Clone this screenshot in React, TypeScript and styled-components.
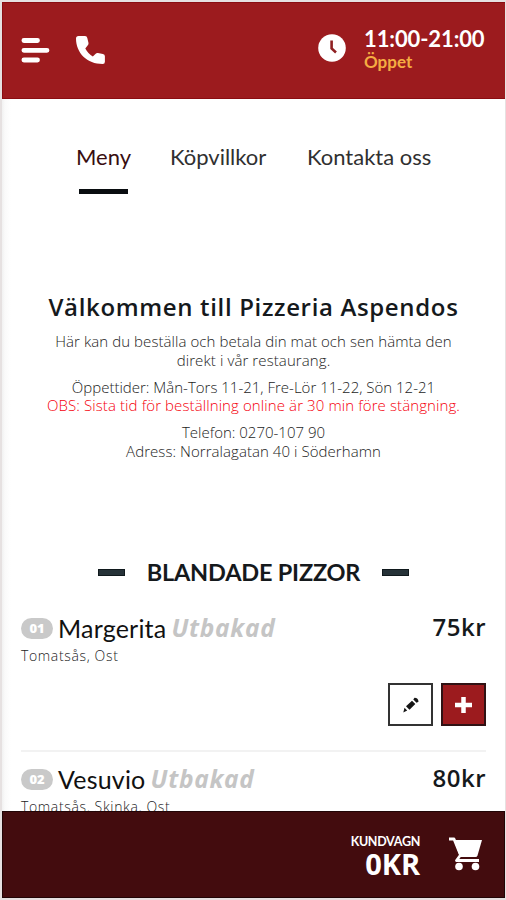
import React from 'react';
import styled, { createGlobalStyle } from 'styled-components';

const lato = "Lato, 'Open Sans', sans-serif";
const openSans = "'Open Sans', 'Noto Sans', sans-serif";

const GlobalStyle = createGlobalStyle`
  * { box-sizing: border-box; }
  body { margin: 0; background: #fff; overflow: hidden; }
  h1, h2, h3, p { margin: 0; }
  svg { display: block; }
`;

const Screen = styled.div`
  width: 506px;
  height: 900px;
  padding: 2px 1px 2px 2px;
  background: #e6e1e1;
  overflow: hidden;
`;

const Page = styled.div`
  display: flex;
  flex-direction: column;
  height: 896px;
  background: linear-gradient(90deg, #f1f1f1 0, #fafafa 3px, #fff 9px);
  color: #15191c;
`;

const Header = styled.header`
  display: flex;
  flex: none;
  align-items: flex-start;
  height: 97px;
  padding: 0 19px 0 18px;
  background: #9c1b1e;
  border: 1px solid #8a0d12;
  border-right: 0;
  color: #fff;
`;

const MenuIcon = styled.svg`
  margin-top: 34px;
`;

const PhoneIcon = styled.svg`
  margin: 33px 0 0 25px;
`;

const Hours = styled.div`
  display: flex;
  margin-left: auto;
`;

const ClockIcon = styled.svg`
  margin: 31px 18px 0 0;
`;

const HoursText = styled.div`
  width: 122px;
  padding-top: 22px;
  font-family: ${lato};
  font-weight: 700;
  white-space: nowrap;
`;

const Time = styled.div`
  font-size: 22px;
  line-height: 28px;
  letter-spacing: -0.1px;
`;

const Status = styled.div`
  font-size: 17px;
  line-height: 18px;
  color: #f5ac42;
`;

const Nav = styled.nav`
  display: flex;
  flex: none;
  height: 112px;
  padding: 45px 0 0 74px;
  font-family: ${lato};
  font-size: 22px;
  line-height: 26px;
  white-space: nowrap;
`;

const NavItem = styled.a<{ $active?: boolean; $width: number }>`
  width: ${p => p.$width}px;
  color: ${p => (p.$active ? '#380d10' : '#303030')};
  &::after {
    content: '';
    display: ${p => (p.$active ? 'block' : 'none')};
    width: 49px;
    height: 5px;
    margin: 19px 0 0 3px;
    background: #090d10;
  }
`;

const Welcome = styled.section`
  flex: none;
  height: 346px;
  padding-top: 79px;
  font-family: ${openSans};
  text-align: center;
  white-space: nowrap;
`;

const Title = styled.h1`
  font-size: 24px;
  font-weight: 650;
  line-height: 34px;
  letter-spacing: 0.65px;
  margin-bottom: 8px;
`;

const Info = styled.p`
  margin-bottom: 8.5px;
  font-size: 15px;
  line-height: 18.5px;
  font-weight: 300;
  color: #1c1c1c;
`;

const Line = styled.span<{ $spacing?: number; $alert?: boolean }>`
  display: block;
  letter-spacing: ${p => p.$spacing ?? 0}px;
  color: ${p => (p.$alert ? '#f5000c' : 'inherit')};
`;

const Category = styled.div`
  display: flex;
  flex: none;
  justify-content: center;
  align-items: center;
  gap: 22px;
  height: 30px;
`;

const Dash = styled.span`
  width: 27px;
  height: 7px;
  background: #263238;
  border: 1px solid #10191d;
`;

const CategoryName = styled.h2`
  font-family: ${lato};
  font-size: 23.5px;
  line-height: 30px;
  font-weight: 700;
  letter-spacing: -0.2px;
  white-space: nowrap;
`;

const Items = styled.main`
  flex: 1;
  min-height: 0;
  overflow: hidden;
  padding: 23px 19px 0;
`;

const Item = styled.article`
  height: 140px;
  & + & { border-top: 2px solid #f2f2f2; }
  & + & > :first-child { margin-top: 9px; }
`;

const ItemTop = styled.div`
  display: flex;
  align-items: center;
  height: 36px;
  white-space: nowrap;
`;

const Num = styled.span`
  width: 32px;
  height: 21px;
  margin-right: 5px;
  border-radius: 11px;
  background: #c9c9c9;
  color: #fff;
  font: 800 13px/21px ${openSans};
  text-align: center;
`;

const Name = styled.h3`
  font: 400 25px/32px ${lato};
  letter-spacing: 0.2px;
  color: #111;
`;

const Style = styled.span`
  margin-left: 5px;
  font: italic 700 24.5px/32px ${openSans};
  letter-spacing: 0.7px;
  color: #c5c5c5;
`;

const Price = styled.span`
  margin: -2px 0 0 auto;
  font: 600 24px/32px ${openSans};
  letter-spacing: 0.5px;
`;

const Ingredients = styled.p`
  height: 20px;
  font: 300 14px/20px ${openSans};
  letter-spacing: 0.65px;
  color: #1c1c1c;
`;

const Actions = styled.div`
  display: flex;
  justify-content: flex-end;
  gap: 8px;
  margin-top: 17px;
`;

const Action = styled.button<{ $primary?: boolean }>`
  display: flex;
  align-items: center;
  justify-content: center;
  width: 45px;
  height: 43px;
  padding: 0;
  border: 2px solid ${p => (p.$primary ? '#301214' : '#333')};
  background: ${p => (p.$primary ? '#9c1b1e' : '#fff')};
`;

const CartBar = styled.footer`
  display: flex;
  flex: none;
  justify-content: flex-end;
  height: 87px;
  padding-right: 21px;
  background: #430c0e;
  border: 1px solid #210506;
  color: #fff;
`;

const CartText = styled.div`
  padding-top: 22px;
  text-align: right;
  white-space: nowrap;
`;

const CartLabel = styled.div`
  font: 700 12.5px/15px ${lato};
  letter-spacing: -0.3px;
`;

const CartTotal = styled.div`
  font: 700 29px/29px ${openSans};
  letter-spacing: -0.1px;
`;

const CartIcon = styled.svg`
  margin: 25px 0 0 29px;
`;

const pizzas = [
  { num: '01', name: 'Margerita', price: '75kr', ingredients: 'Tomatsås, Ost' },
  { num: '02', name: 'Vesuvio', price: '80kr', ingredients: 'Tomatsås, Skinka, Ost' },
];

export default function App() {
  return (
    <Screen>
      <GlobalStyle />
      <Page>
        <Header>
          <MenuIcon width="30" height="28" viewBox="0 0 30 28" stroke="#fff" strokeWidth="4.8" strokeLinecap="round">
            <path d="M2.9 3.5H16.5M2.9 13.3H26M2.9 23H16.5" />
          </MenuIcon>
          <PhoneIcon width="30" height="30" viewBox="0 0 30 30" fill="#fff">
            <path d="M2.5 0h6.5q2 0 2.3 2l1.2 5q.2 1.3-.7 2.2L9.3 12.5q3 5.5 7.5 8l2.9-2.7q.9-1 2.2-.7l5 .9q2 .4 2 2.3v5.5q0 2.2-2.2 2.2C11 28 0 17 0 2.5Q0 0 2.5 0Z" />
          </PhoneIcon>
          <Hours>
            <ClockIcon width="28" height="28" viewBox="0 0 28 28">
              <circle cx="14" cy="14" r="13.8" fill="#fff" />
              <path d="M13.6 6.5V14.5L18 18.5" fill="none" stroke="#8f2022" strokeWidth="2.6" />
            </ClockIcon>
            <HoursText>
              <Time>11:00-21:00</Time>
              <Status>Öppet</Status>
            </HoursText>
          </Hours>
        </Header>
        <Nav>
          <NavItem $active $width={94}>Meny</NavItem>
          <NavItem $width={137}>Köpvillkor</NavItem>
          <NavItem $width={130}>Kontakta oss</NavItem>
        </Nav>
        <Welcome>
          <Title>Välkommen till Pizzeria Aspendos</Title>
          <Info>
            <Line $spacing={0.07}>Här kan du beställa och betala din mat och sen hämta den</Line>
            <Line $spacing={0.1}>direkt i vår restaurang.</Line>
          </Info>
          <Info>
            <Line>Öppettider: Mån-Tors 11-21, Fre-Lör 11-22, Sön 12-21</Line>
            <Line $alert $spacing={0.1}>OBS: Sista tid för beställning online är 30 min före stängning.</Line>
          </Info>
          <Info>
            <Line>Telefon: 0270-107 90</Line>
            <Line $spacing={0.06}>Adress: Norralagatan 40 i Söderhamn</Line>
          </Info>
        </Welcome>
        <Category>
          <Dash />
          <CategoryName>BLANDADE PIZZOR</CategoryName>
          <Dash />
        </Category>
        <Items>
          {pizzas.map(p => (
            <Item key={p.num}>
              <ItemTop>
                <Num>{p.num}</Num>
                <Name>{p.name}</Name>
                <Style>Utbakad</Style>
                <Price>{p.price}</Price>
              </ItemTop>
              <Ingredients>{p.ingredients}</Ingredients>
              <Actions>
                <Action aria-label="Ändra">
                  <svg width="18" height="18" viewBox="0 0 18 18" fill="#151515">
                    <path d="M4 10.2 10 4.7 13.3 8 7.5 13.8Z M11.3 3.5 12.5 1.8Q16.3 2 16.5 5.8L14.5 6.7Z M2.5 11.8 5.2 14.5 1.3 16.5Z" />
                  </svg>
                </Action>
                <Action $primary aria-label="Lägg till">
                  <svg width="18" height="18" viewBox="0 0 18 18" stroke="#fff" strokeWidth="4.5">
                    <path d="M8.5 1V17M0 9H17" />
                  </svg>
                </Action>
              </Actions>
            </Item>
          ))}
        </Items>
        <CartBar>
          <CartText>
            <CartLabel>KUNDVAGN</CartLabel>
            <CartTotal>0KR</CartTotal>
          </CartText>
          <CartIcon width="34" height="34" viewBox="0 0 34 34">
            <path d="M5 3H33L28.5 18.5Q28 20 26.5 20H11Z" fill="#fff" />
            <path d="M0 2H5L11.5 18 7.5 23.5H30" fill="none" stroke="#fff" strokeWidth="2.8" strokeLinejoin="round" />
            <circle cx="10" cy="29.5" r="3.8" fill="#fff" />
            <circle cx="26.5" cy="29.5" r="3.8" fill="#fff" />
          </CartIcon>
        </CartBar>
      </Page>
    </Screen>
  );
}
